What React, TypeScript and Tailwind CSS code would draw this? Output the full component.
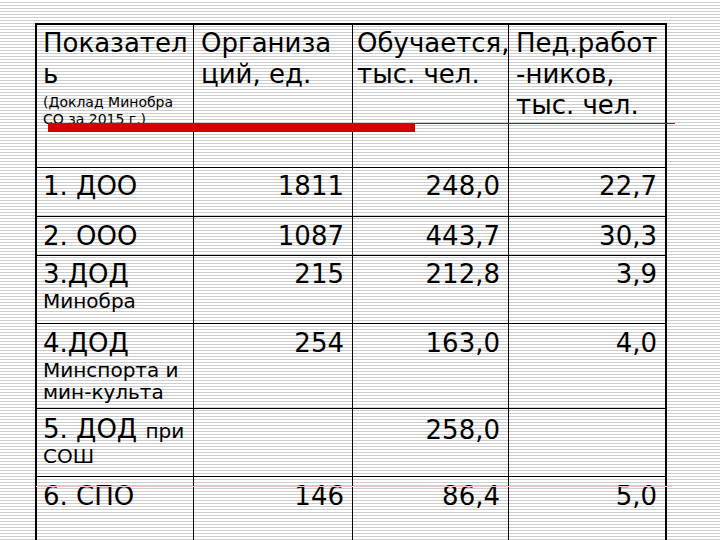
const rows = [
  { h: 'h-[49px]', pt: 'pt-[3px]', label: <div>1. ДОО</div>, org: '1811', stud: '248,0', ped: '22,7' },
  { h: 'h-[39px]', pt: 'pt-[4px]', label: <div>2. ООО</div>, org: '1087', stud: '443,7', ped: '30,3' },
  {
    h: 'h-[68px]',
    pt: 'pt-[3px]',
    label: (
      <>
        <div>3.ДОД</div>
        <div className="text-[20px] leading-[23px]">Минобра</div>
      </>
    ),
    org: '215',
    stud: '212,8',
    ped: '3,9',
  },
  {
    h: 'h-[85px]',
    pt: 'pt-[4px]',
    label: (
      <>
        <div>4.ДОД</div>
        <div className="text-[20px] leading-[22px]">
          Минспорта и
          <br />
          мин-культа
        </div>
      </>
    ),
    org: '254',
    stud: '163,0',
    ped: '4,0',
  },
  {
    h: 'h-[68px]',
    pt: 'pt-[6px]',
    label: (
      <>
        <div className="leading-[28px]">
          5. ДОД <span className="text-[20px]">при</span>
        </div>
        <div className="text-[20px] leading-[22px]">СОШ</div>
      </>
    ),
    org: '',
    stud: '258,0',
    ped: '',
  },
  { h: 'h-[80px]', pt: 'pt-[4px]', label: <div>6. СПО</div>, org: '146', stud: '86,4', ped: '5,0' },
];

export default function App() {
  return (
    <div
      className="relative h-[540px] w-[720px] overflow-hidden bg-[repeating-linear-gradient(to_bottom,#ffffff_0px,#ffffff_2px,#cdcdcd_2px,#cdcdcd_3px)] text-black"
      style={{ fontFamily: '"DejaVu Sans", Verdana, sans-serif' }}
    >
      <div className="ml-[35px] mt-[23px] grid w-[632px] grid-cols-[157px_159px_156px_156px] border-2 border-b-0 border-black text-[26px] leading-[31px]">
        {/* header */}
        <div className="h-[143px] whitespace-nowrap border-b border-r border-black pl-[6px] pt-[3px]">
          <div>
            Показател
            <br />ь
          </div>
          <div className="mt-[4px] text-[14px] leading-[17px]">
            (Доклад Минобра
            <br />
            СО за 2015 г.)
          </div>
        </div>
        <div className="h-[143px] whitespace-nowrap border-b border-r border-black pl-[7px] pt-[3px]">
          Организа
          <br />
          ций, ед.
        </div>
        <div className="h-[143px] whitespace-nowrap border-b border-r border-black pl-[4px] pt-[3px]">
          Обучается,
          <br />
          тыс. чел.
        </div>
        <div className="h-[143px] whitespace-nowrap border-b border-black pl-[7px] pt-[3px]">
          Пед.работ
          <br />
          -ников,
          <br />
          тыс. чел.
        </div>

        {rows.map((r, i) => (
          <div key={i} className="contents">
            <div className={`${r.h} ${r.pt} whitespace-nowrap border-b border-r border-black pl-[6px]`}>{r.label}</div>
            <div className={`${r.h} ${r.pt} border-b border-r border-black pr-[8px] text-right`}>{r.org}</div>
            <div className={`${r.h} ${r.pt} border-b border-r border-black pr-[8px] text-right`}>{r.stud}</div>
            <div className={`${r.h} ${r.pt} border-b border-black pr-[8px] text-right`}>{r.ped}</div>
          </div>
        ))}
      </div>

      {/* red marker lines */}
      <div className="absolute left-[48px] top-[123px] h-[9px] w-[367px] bg-[#d40000]" />
      <div className="absolute left-[415px] top-[123px] h-px w-[260px] bg-[#b01010]" />
      <div className="absolute left-[36px] top-[486px] h-px w-[636px] bg-[#f2c4c4]" />
    </div>
  );
}
